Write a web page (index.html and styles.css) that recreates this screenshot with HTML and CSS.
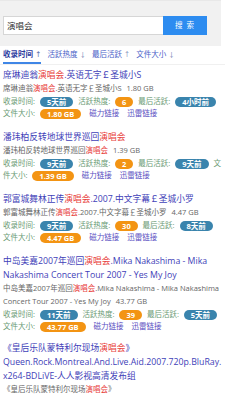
FILE: index.html
```html
<!DOCTYPE html>
<html lang="zh-CN">
<head>
<meta charset="utf-8">
<title>搜索 演唱会</title>
<link rel="stylesheet" href="styles.css">
</head>
<body>
<div class="header">
  <div class="search-input">演唱会</div>
  <div class="search-btn">搜 索</div>
</div>
<div class="sortbar">
  <span class="sort-item active">收录时间 <span class="arrow">↑</span></span>
  <span class="sort-item">活跃热度 <span class="arrow">↓</span></span>
  <span class="sort-item">最后活跃 <span class="arrow">↑</span></span>
  <span class="sort-item">文件大小 <span class="arrow">↓</span></span>
</div>

<div class="item">
  <div class="title">席琳迪翁<em>演唱会</em>.英语无字￡圣城小S</div>
  <div class="sub">席琳迪翁<em>演唱会</em>.英语无字￡圣城小S <span class="size">1.80 GB</span></div>
  <div class="meta">收录时间: <span class="badge info">5天前</span> 活跃热度: <span class="badge warn">6</span> 最后活跃: <span class="badge info">4小时前</span> 文件大小: <span class="badge warn">1.80 GB</span> <a class="link">磁力链接</a> <a class="link">迅雷链接</a></div>
</div>

<div class="item">
  <div class="title">潘玮柏反转地球世界巡回<em>演唱会</em></div>
  <div class="sub">潘玮柏反转地球世界巡回<em>演唱会</em> <span class="size">1.39 GB</span></div>
  <div class="meta">收录时间: <span class="badge info">9天前</span> 活跃热度: <span class="badge warn">2</span> 最后活跃: <span class="badge info">9天前</span> 文件大小: <span class="badge warn">1.39 GB</span> <a class="link">磁力链接</a> <a class="link">迅雷链接</a></div>
</div>

<div class="item">
  <div class="title">郭富城舞林正传<em>演唱会</em>.2007.中文字幕￡圣城小罗</div>
  <div class="sub">郭富城舞林正传<em>演唱会</em>.2007.中文字幕￡圣城小罗 <span class="size">4.47 GB</span></div>
  <div class="meta">收录时间: <span class="badge info">9天前</span> 活跃热度: <span class="badge warn">30</span> 最后活跃: <span class="badge info">8天前</span> 文件大小: <span class="badge warn">4.47 GB</span> <a class="link">磁力链接</a> <a class="link">迅雷链接</a></div>
</div>

<div class="item">
  <div class="title">中岛美嘉2007年巡回<em>演唱会</em>.Mika Nakashima - Mika Nakashima Concert Tour 2007 - Yes My Joy</div>
  <div class="sub">中岛美嘉2007年巡回<em>演唱会</em>.Mika Nakashima - Mika Nakashima Concert Tour 2007 - Yes My Joy <span class="size">43.77 GB</span></div>
  <div class="meta">收录时间: <span class="badge info">11天前</span> 活跃热度: <span class="badge warn">39</span> 最后活跃: <span class="badge info">5天前</span> 文件大小: <span class="badge warn">43.77 GB</span> <a class="link">磁力链接</a> <a class="link">迅雷链接</a></div>
</div>

<div class="item last">
  <div class="title">《皇后乐队蒙特利尔现场<em>演唱会</em>》Queen.Rock.Montreal.And.Live.Aid.2007.720p.BluRay.x264-BDLiVE-人人影视高清发布组</div>
  <div class="sub">《皇后乐队蒙特利尔现场<em>演唱会</em>》</div>
</div>
</body>
</html>
```
FILE: styles.css
```css
html, body {
  margin: 0;
  padding: 0;
  background: #fff;
}
body {
  font-family: "Open Sans", "Noto Sans CJK SC", sans-serif;
  color: #333;
  width: 225px;
  overflow: hidden;
}
.header {
  display: flex;
  background: #f1f1f1;
  border-top: 1px solid #e8e8e8;
  margin-right: 4px;
  padding: 15px 0 11px 3px;
}
.search-input {
  box-sizing: border-box;
  width: 160px;
  height: 19px;
  border: 1px solid #d6d6d6;
  border-right: none;
  background: #fff;
  font-size: 8.5px;
  line-height: 17px;
  padding-left: 3px;
  color: #333;
}
.search-btn {
  width: 44px;
  height: 19px;
  background: #2d8cf0;
  color: #fff;
  font-size: 7.5px;
  line-height: 19px;
  text-align: center;
  letter-spacing: 1px;
}
.sortbar {
  display: flex;
  gap: 6px;
  padding: 0 3px;
  height: 18px;
  border-bottom: 1px solid #f0f0f0;
  font-size: 7.5px;
  line-height: 17px;
}
.sort-item {
  color: #4a62c8;
  white-space: nowrap;
}
.sort-item .arrow {
  color: #6a7ab0;
  font-size: 6.5px;
}
.sort-item.active {
  color: #2c3a9e;
  font-weight: bold;
  border-bottom: 2px solid #3f86e6;
}
.item {
  padding: 0 3px;
  margin-top: 11px;
  overflow-wrap: break-word;
  word-wrap: break-word;
}
.sortbar + .item {
  margin-top: 3px;
}
.item.last {
  margin-top: 9px;
}
.title {
  font-size: 8.75px;
  line-height: 14px;
  color: #4141b8;
}
em {
  font-style: normal;
  color: #e8413c;
}
.sub {
  font-size: 7.5px;
  line-height: 13px;
  color: #666;
}
.size {
  margin-left: 3px;
}
.meta {
  font-size: 7.5px;
  line-height: 12px;
  color: #6a9a74;
}
.badge {
  display: inline-block;
  color: #fff;
  font-weight: bold;
  font-size: 7.5px;
  line-height: 10px;
  height: 10px;
  padding: 0 7px;
  border-radius: 6px;
  margin: 0 3px;
  vertical-align: middle;
}
.badge.info {
  background: #3a84ad;
}
.badge.warn {
  background: #f39413;
}
.link {
  color: #5a4fc2;
  margin: 0 3px;
}
```
